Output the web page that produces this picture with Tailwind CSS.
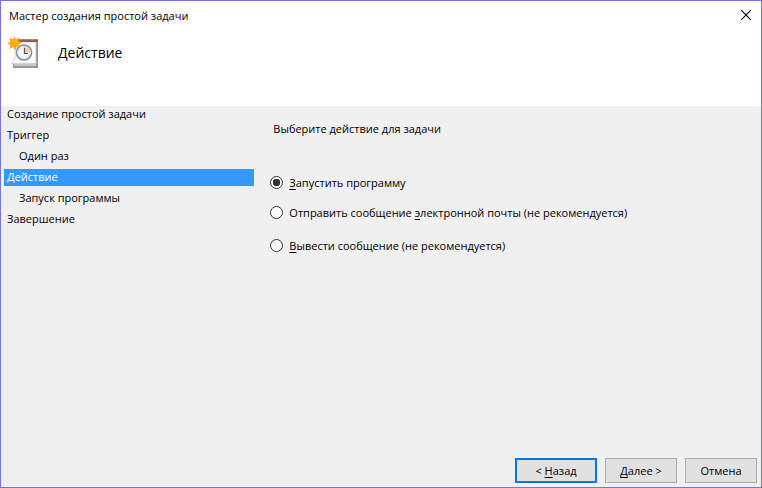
<!DOCTYPE html>
<html lang="ru">
  <head>
    <meta charset="UTF-8" />
    <meta name="viewport" content="width=device-width, initial-scale=1.0" />
    <script src="https://cdn.jsdelivr.net/npm/@tailwindcss/browser@4"></script>
    <title>Мастер создания простой задачи</title>
  </head>

  <body class="font-['Open_Sans','Noto_Sans',sans-serif] text-[11px] leading-[17px] text-black">
    <div class="flex min-h-screen flex-col border border-[#7774d6] bg-[#f0f0f0]">
      <!-- заголовок окна -->
      <header class="h-[105px] bg-white">
        <div class="flex h-[28px] items-center justify-between pl-2 pr-[10px]">
          <h1>Мастер создания простой задачи</h1>
          <button type="button" aria-label="Закрыть">
            <svg class="block size-[10px]" viewBox="0 0 10 10" fill="none" stroke="#000" stroke-width="1.1">
              <path d="M0 0l10 10M10 0L0 10" />
            </svg>
          </button>
        </div>
        <div class="flex items-center gap-[18px] pl-[6px] pt-[7px]">
          <svg class="size-[33px]" viewBox="0 0 33 33">
            <path d="M26 3h5v29H6v-4h20z" fill="#989494" />
            <path d="M7 28h22v2H7z" fill="#c9c6c5" />
            <path d="M8 6h21v19c0 1 .5 2 .5 2.500H4.500C6.500 25.500 8 22 8 18z" fill="#fbfbfb" stroke="#c4c0c0" stroke-width=".7" />
            <path d="M9 3h22v3H9z" fill="#94604f" />
            <path d="M9 3h22v1H9z" fill="#b5806f" />
            <circle cx="17" cy="16.500" r="7.600" fill="#f2f5f8" stroke="#8a9097" stroke-width="1.500" />
            <path d="M17 16.500v-6a6 6 0 0 1 6 6z" fill="#f3d494" />
            <circle cx="17" cy="16.500" r="6.200" fill="none" stroke="#ccd1d7" stroke-width=".6" />
            <path d="M17.500 12v5.500H21" fill="none" stroke="#3f566d" stroke-width="1.200" />
            <path
              d="M7.500 0l1.200 3.200L12.500 1.500l-1.200 3.500 4 1.800-3.800 1.500 2 4-3.900-1.700L8 14.500l-1.900-3.600L2.300 13l1.200-3.900L0 7.500l3.500-1.700L2 2l3.900 1.500z"
              fill="#f7a11a"
            />
            <circle cx="7.500" cy="7" r="4.200" fill="#ffad14" />
          </svg>
          <h2 class="text-[14px]">Действие</h2>
        </div>
      </header>

      <div class="flex grow">
        <!-- шаги мастера -->
        <nav class="w-1/3 pl-[3px]">
          <ol class="flex flex-col gap-1 leading-[15px]">
            <li class="pb-[2px] pl-[3px]">Создание простой задачи</li>
            <li class="pb-[2px] pl-[3px]">Триггер</li>
            <li class="pb-[2px] pl-[15px]">Один раз</li>
            <li class="bg-[#3399ff] pb-[2px] pl-[3px] text-white" aria-current="step">Действие</li>
            <li class="pb-[2px] pl-[15px]">Запуск программы</li>
            <li class="pb-[2px] pl-[3px]">Завершение</li>
          </ol>
        </nav>

        <!-- выбор действия -->
        <fieldset class="min-w-0 grow pl-4 pt-[14px]" aria-labelledby="prompt">
          <p id="prompt" class="pl-[3px]">Выберите действие для задачи</p>
          <div class="mt-[37px] flex items-center gap-[6px]">
            <input
              id="run"
              type="radio"
              name="action"
              checked
              class="size-[13px] appearance-none rounded-full border border-[#333] bg-white checked:bg-[radial-gradient(circle,#333_3.5px,#fff_4px)]"
            />
            <label for="run"><u class="underline-offset-2">З</u>апустить программу</label>
          </div>
          <div class="mt-[13px] flex items-center gap-[6px]">
            <input
              id="mail"
              type="radio"
              name="action"
              class="size-[13px] appearance-none rounded-full border border-[#333] bg-white checked:bg-[radial-gradient(circle,#333_3.5px,#fff_4px)]"
            />
            <label for="mail">Отправить сообщение <u class="underline-offset-2">э</u>лектронной почты (не рекомендуется)</label>
          </div>
          <div class="mt-[16px] flex items-center gap-[6px]">
            <input
              id="message"
              type="radio"
              name="action"
              class="size-[13px] appearance-none rounded-full border border-[#333] bg-white checked:bg-[radial-gradient(circle,#333_3.5px,#fff_4px)]"
            />
            <label for="message"><u class="underline-offset-2">В</u>ывести сообщение (не рекомендуется)</label>
          </div>
        </fieldset>
      </div>

      <!-- кнопки -->
      <footer class="flex justify-end gap-2 pb-1 pr-1">
        <button type="button" class="h-[25px] w-[82px] border-2 border-[#0078d7] bg-[#e1e1e1]">
          &lt; <u class="underline-offset-2">Н</u>азад
        </button>
        <button type="button" class="h-[25px] w-[72px] border border-[#adadad] bg-[#e1e1e1]">
          <u class="underline-offset-2">Д</u>алее &gt;
        </button>
        <button type="button" class="h-[25px] w-[72px] border border-[#adadad] bg-[#e1e1e1]">Отмена</button>
      </footer>
    </div>
  </body>
</html>
